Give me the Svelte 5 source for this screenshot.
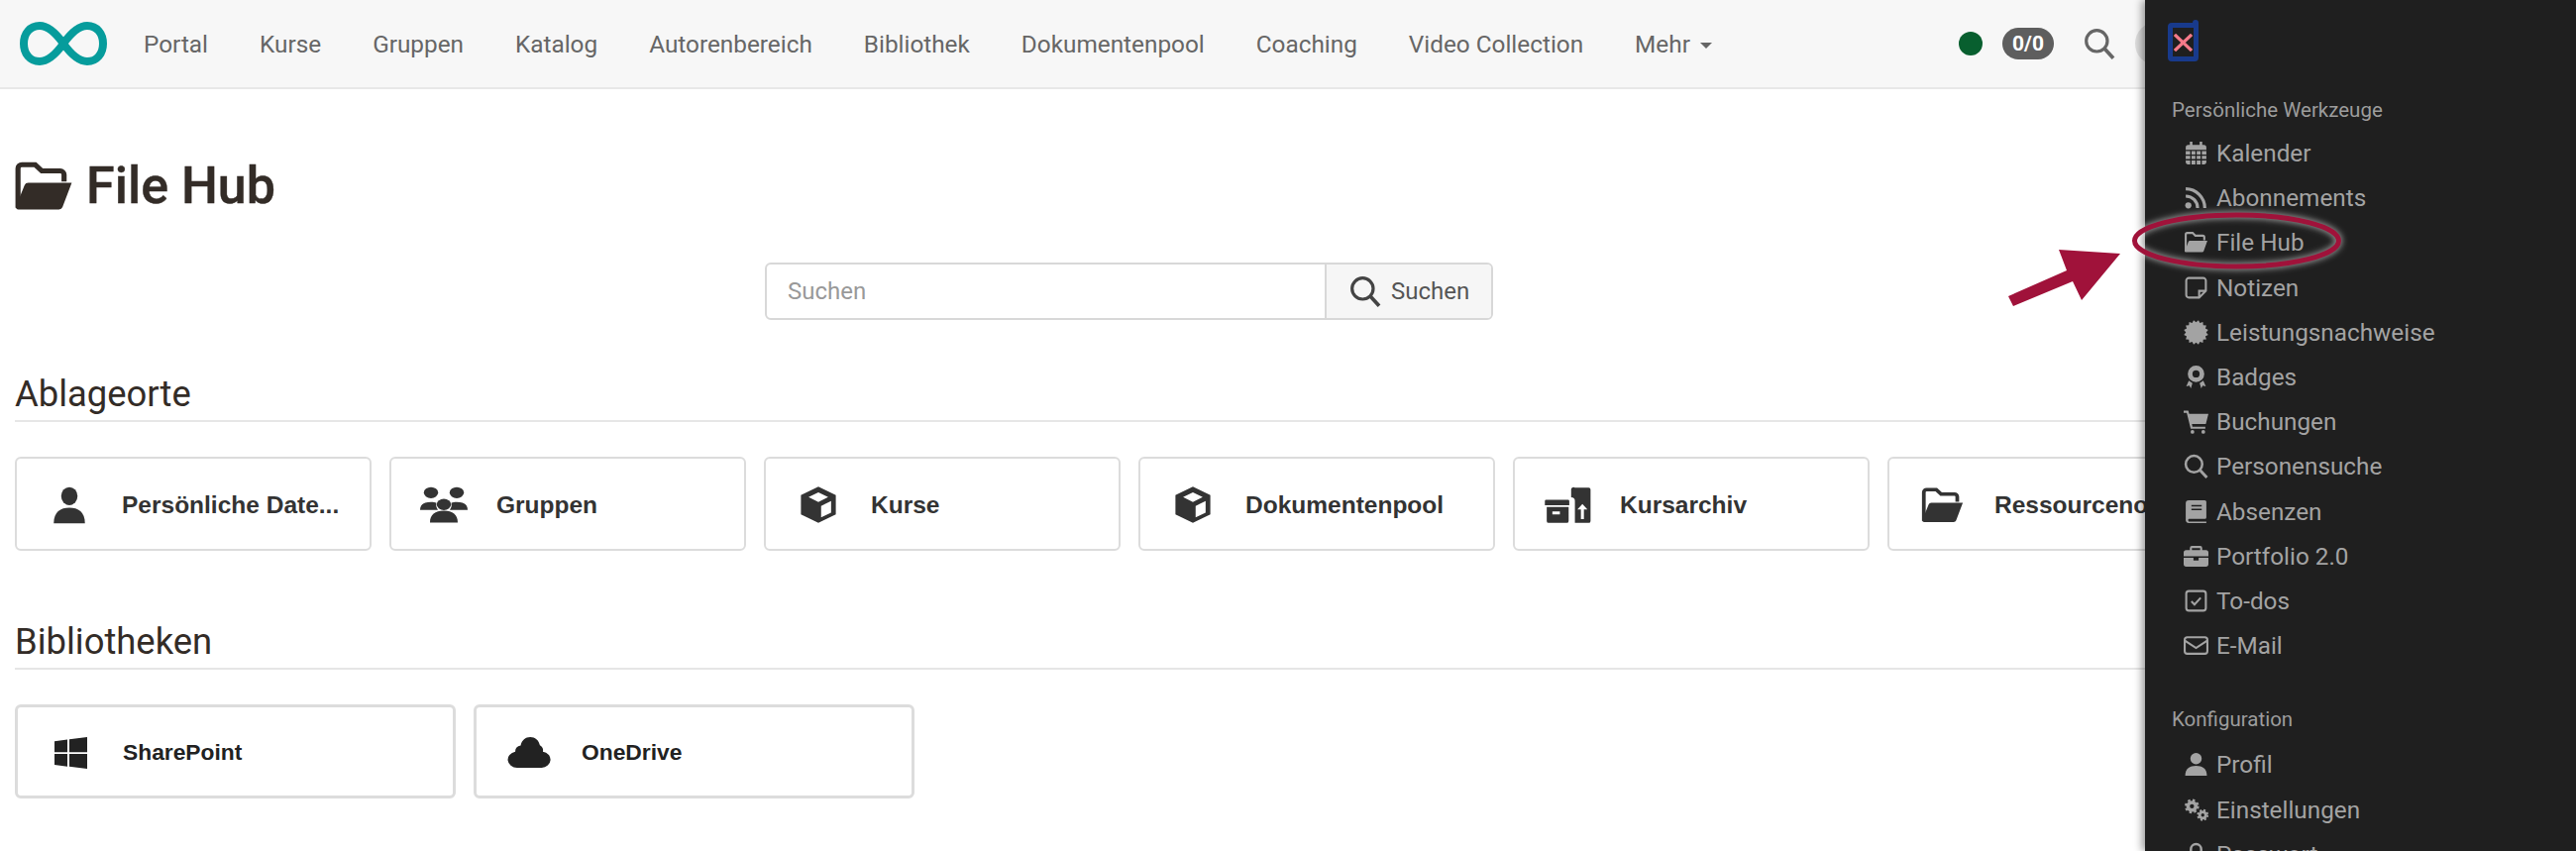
<script>
	const nav = ['Portal', 'Kurse', 'Gruppen', 'Katalog', 'Autorenbereich', 'Bibliothek', 'Dokumentenpool', 'Coaching', 'Video Collection'];

	// 16 tooth seal for the certificate icon
	const seal = Array.from({ length: 32 }, (_, i) => {
		const r = i % 2 ? 12 : 9.8;
		const a = (i * Math.PI) / 16;
		return `${(12 + r * Math.cos(a)).toFixed(2)},${(12 + r * Math.sin(a)).toFixed(2)}`;
	}).join(' ');

	const folder =
		'<path d="M2 21V4.500A1.500 1.500 0 0 1 3.500 3h5.200l2.600 2.600h7.200a1.500 1.500 0 0 1 1.500 1.500V10" fill="none" stroke="currentColor" stroke-width="2"/><path d="M6 10.500h17l-3.600 10.200a1.500 1.500 0 0 1-1.400 1H2.200a1 1 0 0 1-1-1.300L4.600 11.500a1.500 1.500 0 0 1 1.400-1z"/>';
	const cube =
		'<path fill-rule="evenodd" d="M12 .8l9.600 5.200v12L12 23.200 2.400 18V6zM12 4.300L6.600 7.300 12 10.300l5.400-3zM13.500 12.700v7.200l5.500-3V9.700z"/>';
	const user =
		'<circle cx="12" cy="6.500" r="5.500"/><path d="M1.500 23c0-7 4.500-9.500 10.500-9.500S22.500 16 22.500 23z"/>';

	const icons = {
		calendar:
			'<path d="M6 1h2.500v3H15.500V1H18v3h1.500A2.500 2.500 0 0 1 22 6.500V20.500A2.500 2.500 0 0 1 19.500 23h-15A2.500 2.500 0 0 1 2 20.500V6.500A2.500 2.500 0 0 1 4.500 4H6z"/><path d="M2 9.500h20M2 14h20M2 18.500h20M7 9.500V23M12 9.500V23M17 9.500V23" stroke="#1f1f1f" stroke-width="1.300"/>',
		rss: '<circle cx="4.500" cy="19.500" r="3"/><path d="M2 10.500a11.500 11.500 0 0 1 11.500 11.500M2 3.500A18.500 18.500 0 0 1 20.500 22" fill="none" stroke="currentColor" stroke-width="3"/>',
		folder,
		note: '<path d="M15 21.500H5A2.500 2.500 0 0 1 2.500 19V5A2.500 2.500 0 0 1 5 2.500h14A2.500 2.500 0 0 1 21.500 5v10zM15 21.500V15h6.500" fill="none" stroke="currentColor" stroke-width="2"/>',
		seal: `<polygon points="${seal}"/>`,
		award:
			'<path fill-rule="evenodd" d="M12 1a8 8 0 1 1 0 16 8 8 0 0 1 0-16zm0 4.500a3.500 3.500 0 1 0 0 7 3.500 3.500 0 0 0 0-7z"/><path d="M5 15.500l3.500 2.500-1.500 5-1.500-2.500-3 .5zM19 15.500L15.500 18l1.500 5 1.500-2.500 3 .5z"/>',
		cart: '<path d="M0 1.500h4.500l.8 3H24l-2.500 10H8l.5 2.500H21v2H6.800L3 3.500H0z"/><circle cx="8.500" cy="22" r="1.800"/><circle cx="19" cy="22" r="1.800"/>',
		search:
			'<circle cx="10" cy="10" r="8" fill="none" stroke="currentColor" stroke-width="2.400"/><path d="M15.800 15.800L22.500 23" fill="none" stroke="currentColor" stroke-width="2.800"/>',
		book: '<path fill-rule="evenodd" d="M5 1h15.500A1.500 1.500 0 0 1 22 2.500V17.500A1.500 1.500 0 0 1 20.500 19H5a1.500 1.500 0 0 0 0 2.500h17V23H5A3 3 0 0 1 2 20V4A3 3 0 0 1 5 1zM7.500 5.500v1.500h10V5.500zM7.500 9v1.500h10V9z"/>',
		briefcase:
			'<path fill-rule="evenodd" d="M8 2h8a2 2 0 0 1 2 2v2h3.500A2.500 2.500 0 0 1 24 8.500V12H0V8.500A2.500 2.500 0 0 1 2.500 6H6V4a2 2 0 0 1 2-2zm0 2v2h8V4z"/><path d="M0 13.500h9.500V16h5v-2.500H24V19.500A2.500 2.500 0 0 1 21.500 22h-19A2.500 2.500 0 0 1 0 19.500z"/>',
		check:
			'<rect x="2.500" y="2.500" width="19" height="19" rx="2.500" fill="none" stroke="currentColor" stroke-width="2"/><path d="M7.500 12.500l3 3 6-6.500" fill="none" stroke="currentColor" stroke-width="2"/>',
		mail: '<rect x="1" y="4" width="22" height="16" rx="2.500" fill="none" stroke="currentColor" stroke-width="2"/><path d="M1.500 7.500L12 14.500l10.500-7" fill="none" stroke="currentColor" stroke-width="2"/>',
		user,
		cogs: '<g fill="none" stroke="currentColor"><circle cx="8" cy="8.500" r="3.800" stroke-width="3.400"/><circle cx="8" cy="8.500" r="6" stroke-width="2" stroke-dasharray="2.400 2.300"/><circle cx="18.500" cy="17" r="3" stroke-width="2.800"/><circle cx="18.500" cy="17" r="4.800" stroke-width="1.800" stroke-dasharray="2 1.800"/></g>',
		lock: '<path d="M7 11V7a5 5 0 0 1 10 0v4" fill="none" stroke="currentColor" stroke-width="2.400"/><rect x="3.500" y="10.500" width="17" height="12.500" rx="2"/>'
	};

	const tools = [
		['calendar', 'Kalender'],
		['rss', 'Abonnements'],
		['folder', 'File Hub'],
		['note', 'Notizen'],
		['seal', 'Leistungsnachweise'],
		['award', 'Badges'],
		['cart', 'Buchungen'],
		['search', 'Personensuche'],
		['book', 'Absenzen'],
		['briefcase', 'Portfolio 2.0'],
		['check', 'To-dos'],
		['mail', 'E-Mail']
	];
	const config = [
		['user', 'Profil'],
		['cogs', 'Einstellungen'],
		['lock', 'Passwort']
	];

	const groups =
		'<circle cx="5.500" cy="4" r="3.600"/><circle cx="18.500" cy="4" r="3.600"/><circle cx="12" cy="11.500" r="3.600"/><path d="M0 15c0-3.500 2-5 5.500-5 1.200 0 2 .2 2.800.6a5.500 5.500 0 0 0 .7 4.400zM24 15c0-3.500-2-5-5.500-5-1.200 0-2 .2-2.800.6a5.500 5.500 0 0 1-.7 4.400zM5 23c0-5 2.500-7.500 7-7.500s7 2.500 7 7.500z"/>';
	const archive =
		'<path d="M2 11h17.500a1 1 0 0 1 1 1v3.500H1V12a1 1 0 0 1 1-1zM2.500 17H20v11.500a1.500 1.500 0 0 1-1.500 1.500H4a1.500 1.500 0 0 1-1.500-1.500zM7 20.500v2.500h6v-2.500z" fill-rule="evenodd"/><path fill-rule="evenodd" d="M22 1h11a1.500 1.500 0 0 1 1.500 1.500v26A1.500 1.500 0 0 1 33 30H22V12a3 3 0 0 0-3-3V3a2 2 0 0 1 3-2zM28 14.500l-4 4.500h2.800v8h2.400v-8H32z" transform="translate(3 0)"/>';
	const windows =
		'<path d="M0 4.500l13-1.800v13.500H0zM15 2.400L33 0v16.200H15zM0 18h13v13.500L0 29.700zM15 18h18v16l-18-2.400z" />';
	const cloud =
		'<path d="M9 31a8 8 0 0 1-1.500-15.800 a6 6 0 0 1 4.500-6C13 4 16 1 20 1c4 0 7 3 8 8a6 6 0 0 1 2.500 6.200A8 8 0 0 1 29.500 31z"/>';

	const places = [
		{ name: 'Persönliche Date...', svg: user, view: '0 0 24 24', w: 36, h: 40 },
		{ name: 'Gruppen', svg: groups, view: '0 0 24 24', w: 48, h: 38 },
		{ name: 'Kurse', svg: cube, view: '0 0 24 24', w: 44, h: 39 },
		{ name: 'Dokumentenpool', svg: cube, view: '0 0 24 24', w: 44, h: 39 },
		{ name: 'Kursarchiv', svg: archive, view: '0 0 38 31', w: 48, h: 38 },
		{ name: 'Ressourcenordner', svg: folder, view: '0 0 24 24', w: 45, h: 42 }
	];
	const libs = [
		{ name: 'SharePoint', svg: windows, view: '0 0 33 34', w: 33, h: 32 },
		{ name: 'OneDrive', svg: cloud, view: '0 0 38 32', w: 46, h: 33 }
	];
</script>

<div class="screen">
	<header class="navbar">
		<svg class="logo" viewBox="0 0 88 44" aria-hidden="true">
			<path d="M44 22C34 8 26 4 20 4 10 4 4 12 4 22s6 18 16 18c6 0 14-4 24-18 10-14 18-18 24-18 10 0 16 8 16 18s-6 18-16 18c-6 0-14-4-24-18z" />
		</svg>
		<nav class="links">
			{#each nav as item}
				<span>{item}</span>
			{/each}
			<span>Mehr <i class="caret"></i></span>
		</nav>
		<div class="tools">
			<i class="dot"></i>
			<b class="count">0/0</b>
			<svg class="tool-search" viewBox="0 0 24 24" aria-hidden="true">{@html icons.search}</svg>
			<i class="avatar"></i>
		</div>
	</header>

	<main class="page">
		<h1>
			<svg viewBox="0 0 24 24" preserveAspectRatio="none" aria-hidden="true">{@html folder}</svg>
			File Hub
		</h1>

		<div class="search">
			<div class="search-input">Suchen</div>
			<button>
				<svg viewBox="0 0 24 24" aria-hidden="true">{@html icons.search}</svg>
				Suchen
			</button>
		</div>

		<section class="first">
			<h2>Ablageorte</h2>
			<div class="cards">
				{#each places as card}
					<div class="card">
						<span class="card-icon">
							<svg viewBox={card.view} preserveAspectRatio="none" style="width: {card.w}px; height: {card.h}px" aria-hidden="true">{@html card.svg}</svg>
						</span>
						<span>{card.name}</span>
					</div>
				{/each}
			</div>
		</section>

		<section class="second">
			<h2>Bibliotheken</h2>
			<div class="cards">
				{#each libs as card}
					<div class="card lib">
						<span class="card-icon">
							<svg viewBox={card.view} preserveAspectRatio="none" style="width: {card.w}px; height: {card.h}px" aria-hidden="true">{@html card.svg}</svg>
						</span>
						<span>{card.name}</span>
					</div>
				{/each}
			</div>
		</section>
	</main>

	<aside class="panel">
		<button class="close" aria-label="Schliessen">
			<svg viewBox="0 0 20 20" preserveAspectRatio="none" aria-hidden="true"><path d="M1 1l18 18M19 1L1 19" /></svg>
		</button>
		<h3>Persönliche Werkzeuge</h3>
		<ul>
			{#each tools as [icon, label]}
				<li>
					<span class="li-icon"><svg viewBox="0 0 24 24" aria-hidden="true">{@html icons[icon]}</svg></span>
					{label}
				</li>
			{/each}
		</ul>
		<h3 class="config">Konfiguration</h3>
		<ul>
			{#each config as [icon, label]}
				<li>
					<span class="li-icon"><svg viewBox="0 0 24 24" aria-hidden="true">{@html icons[icon]}</svg></span>
					{label}
				</li>
			{/each}
		</ul>
	</aside>

	<svg class="marker" viewBox="0 0 2600 859" aria-hidden="true">
		<defs>
			<filter id="glow" x="-10%" y="-40%" width="120%" height="180%">
				<feGaussianBlur stdDeviation="3" />
			</filter>
		</defs>
		<ellipse class="halo" cx="2257.500" cy="243" rx="103" ry="26" filter="url(#glow)" />
		<ellipse class="ring" cx="2257.500" cy="243" rx="103" ry="26" />
		<polygon class="arrow" points="2078,252 2140,256 2101,303 2092,284 2032,309 2027,299 2086,273" />
	</svg>
</div>

<style>
	:global(body) {
		margin: 0;
		background: #fff;
	}

	.screen {
		position: relative;
		width: 2600px;
		height: 859px;
		overflow: hidden;
		font-family: Roboto, sans-serif;
		color: #332c27;
	}

	.navbar {
		display: flex;
		align-items: center;
		height: 88px;
		background: #f7f7f7;
		border-bottom: 2px solid #e8e8e8;
		padding-left: 20px;
	}

	.logo {
		width: 88px;
		height: 44px;
		flex: none;
	}

	.logo path {
		fill: none;
		stroke: #069c9c;
		stroke-width: 8;
	}

	.links {
		display: flex;
		gap: 52px;
		margin-left: 37px;
		font-size: 24.330px;
		color: #666;
		white-space: nowrap;
	}

	.caret {
		display: inline-block;
		margin-left: 4px;
		vertical-align: middle;
		border-top: 6px solid #666;
		border-left: 6px solid transparent;
		border-right: 6px solid transparent;
	}

	.tools {
		display: flex;
		align-items: center;
		margin-left: auto;
		margin-right: 401px;
	}

	.dot {
		width: 24px;
		height: 24px;
		border-radius: 50%;
		background: #085f2f;
	}

	.count {
		margin-left: 20px;
		width: 52px;
		height: 32px;
		line-height: 32px;
		text-align: center;
		border-radius: 16px;
		background: #5e5e5e;
		color: #fff;
		font-size: 21px;
	}

	.tool-search {
		width: 32px;
		height: 32px;
		margin-left: 30px;
		color: #666;
	}

	.avatar {
		width: 44px;
		height: 44px;
		margin-left: 20px;
		border-radius: 50%;
		background: #ddd;
	}

	.page {
		padding: 0 0 0 15px;
	}

	h1 {
		display: flex;
		align-items: center;
		gap: 12px;
		height: 56px;
		margin: 70px 0 0;
		font-size: 52px;
		font-weight: 500;
		line-height: 56px;
		-webkit-text-stroke: 0.4px currentColor;
	}

	h1 svg {
		width: 62px;
		height: 58px;
		margin-left: -2px;
		fill: currentColor;
	}

	.search {
		display: flex;
		width: 735px;
		height: 58px;
		margin: 49px 0 0 757px;
		box-sizing: border-box;
		border: 2px solid #d8d8d8;
		border-radius: 6px;
		font-size: 24px;
	}

	.search-input {
		flex: 1;
		line-height: 54px;
		padding-left: 21px;
		color: #999;
	}

	.search button {
		display: flex;
		align-items: center;
		gap: 10px;
		width: 168px;
		padding: 0 0 0 23px;
		border: 0;
		border-left: 2px solid #d8d8d8;
		border-radius: 0 4px 4px 0;
		background: #f6f6f6;
		color: #555;
		font: inherit;
	}

	.search button svg {
		width: 32px;
		height: 32px;
		fill: #444;
		color: #444;
	}

	h2 {
		margin: 0;
		padding-bottom: 4px;
		border-bottom: 2px solid #e6e6e6;
		font-size: 36.400px;
		font-weight: 400;
		line-height: 44px;
		height: 44px;
	}

	section.first {
		margin-top: 53px;
	}

	section.second {
		margin-top: 70px;
	}

	.cards {
		display: flex;
		gap: 18px;
		margin-top: 35px;
	}

	.card {
		display: flex;
		align-items: center;
		flex: none;
		box-sizing: border-box;
		width: 360px;
		height: 95px;
		padding: 2px 0 0 30px;
		border: 2px solid #dcdcdc;
		border-radius: 6px;
		font-family: 'Liberation Sans', Arial, sans-serif;
		font-size: 24.500px;
		font-weight: 700;
		color: #333;
		white-space: nowrap;
	}

	.card.lib {
		width: 445px;
		border-width: 3px;
		color: #222;
		font-size: 22.800px;
		padding-left: 30px;
	}

	.card-icon {
		display: flex;
		justify-content: center;
		flex: none;
		width: 46px;
		margin-right: 30px;
	}

	.card-icon svg {
		flex: none;
		fill: currentColor;
	}

	.panel {
		position: absolute;
		top: 0;
		right: 0;
		bottom: 0;
		width: 435px;
		overflow: hidden;
		background: #1f1f1f;
		box-shadow: -3px 0 8px rgba(0, 0, 0, 0.4);
		color: #a3a3a3;
		font-size: 24.300px;
	}

	.close {
		position: relative;
		display: flex;
		align-items: center;
		justify-content: center;
		box-sizing: border-box;
		width: 31px;
		height: 39px;
		margin: 23px 0 0 23px;
		padding: 0;
		border: 5px solid #183a8c;
		border-radius: 4px;
		background: none;
	}

	/* little notch on the top right of the focus ring */
	.close::after {
		content: '';
		position: absolute;
		top: -8px;
		right: -5px;
		width: 6px;
		height: 7px;
		border-radius: 3px 3px 0 0;
		background: #183a8c;
	}

	.close svg {
		flex: none;
		width: 19px;
		height: 18px;
	}

	.close path {
		fill: none;
		stroke: #f57a8a;
		stroke-width: 3.500;
	}

	h3 {
		margin: 34px 0 0 27px;
		font-size: 20.500px;
		font-weight: 400;
		line-height: 30px;
		color: #9c9c9c;
	}

	h3.config {
		margin-top: 37px;
	}

	ul {
		margin: 6px 0 0;
		padding: 0;
		list-style: none;
	}

	h3.config + ul {
		margin-top: 8px;
	}

	li {
		display: flex;
		align-items: center;
		height: 45.200px;
		padding-left: 37px;
		white-space: nowrap;
	}

	.li-icon {
		display: flex;
		justify-content: center;
		width: 28px;
		margin-right: 7px;
	}

	.li-icon svg {
		width: 25px;
		height: 25px;
		fill: currentColor;
	}

	.marker {
		position: absolute;
		top: 0;
		left: 0;
		width: 2600px;
		height: 859px;
		pointer-events: none;
	}

	.ring,
	.halo {
		fill: none;
		stroke-width: 5;
	}

	.ring {
		stroke: #a0123a;
	}

	.halo {
		stroke: #ffffff;
		stroke-opacity: 0.55;
		stroke-width: 7;
	}

	.arrow {
		fill: #a0123a;
	}
</style>
